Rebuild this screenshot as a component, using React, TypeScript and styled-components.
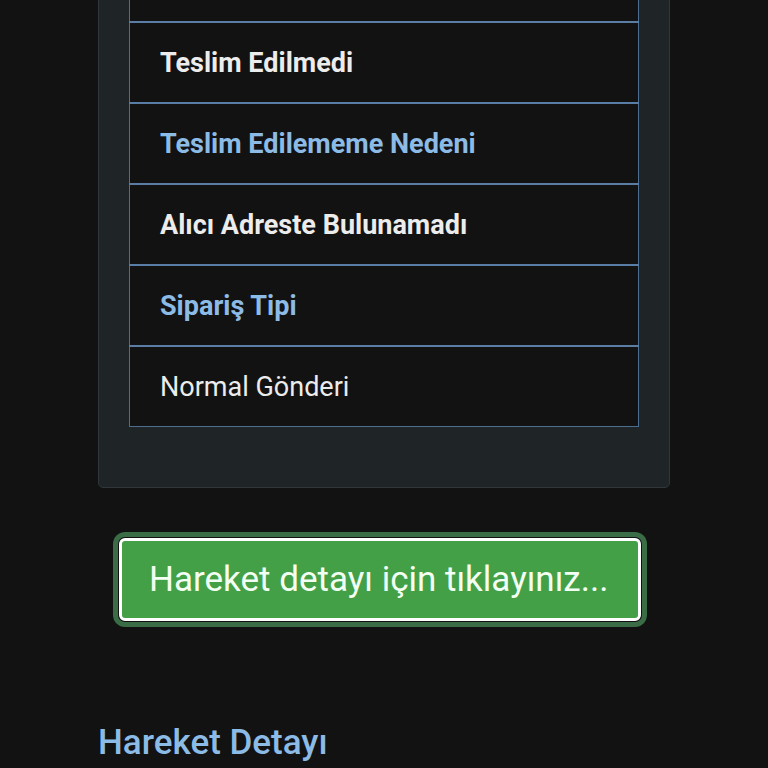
import React from "react";
import styled, { createGlobalStyle } from "styled-components";

const GlobalStyle = createGlobalStyle`
  html, body {
    margin: 0;
    padding: 0;
    background: #121212;
    font-family: Roboto, "Noto Sans", "Liberation Sans", sans-serif;
    overflow: hidden;
  }
`;

const Page = styled.main`
  width: 768px;
  height: 768px;
  overflow: hidden;
  display: flex;
  flex-direction: column;
`;

const Card = styled.section`
  margin: -92px 98px 0;
  padding: 31px 30px 60px;
  background: #1f2427;
  border: 1px solid #30363a;
  border-radius: 5px;
`;

const Table = styled.table`
  width: 100%;
  border-collapse: collapse;
  border-left: 1px solid #4d6d91;
  border-right: 1px solid #4d6d91;
`;

const Cell = styled.td<{ $label?: boolean; $light?: boolean }>`
  height: 79px;
  padding: 0 30px;
  background: #121212;
  border-top: 2px solid #5a7da6;
  border-bottom: 1px solid #4d6d91;
  font-size: 27px;
  font-weight: ${({ $light }) => ($light ? 400 : 700)};
  color: ${({ $label }) => ($label ? "#8cbbe6" : "#ececec")};
`;

const ButtonWrap = styled.div`
  margin: 50px 0 0 119px;
  width: 522px;
`;

const DetailButton = styled.button`
  width: 100%;
  height: 83px;
  background: #43a047;
  border: 3px solid #ffffff;
  border-radius: 6px;
  box-shadow: 0 0 0 1px #111, 0 0 0 6px #3a6c45;
  color: #f4fff4;
  font-family: Roboto, "Noto Sans", sans-serif;
  font-size: 35px;
  text-align: left;
  padding: 0 27px;
`;

const Heading = styled.h2`
  margin: 101px 0 0 98px;
  font-size: 35px;
  font-weight: 500;
  color: #8cbbe6;
`;

const rows: { text: string; label?: boolean; light?: boolean }[] = [
  { text: "Teslim Durumu", label: true },
  { text: "Teslim Edilmedi" },
  { text: "Teslim Edilememe Nedeni", label: true },
  { text: "Alıcı Adreste Bulunamadı" },
  { text: "Sipariş Tipi", label: true },
  { text: "Normal Gönderi", light: true },
];

export default function App() {
  return (
    <Page>
      <GlobalStyle />
      <Card>
        <Table>
          <tbody>
            {rows.map((r) => (
              <tr key={r.text}>
                <Cell $label={r.label} $light={r.light}>
                  {r.text}
                </Cell>
              </tr>
            ))}
          </tbody>
        </Table>
      </Card>
      <ButtonWrap>
        <DetailButton>Hareket detayı için tıklayınız...</DetailButton>
      </ButtonWrap>
      <Heading>Hareket Detayı</Heading>
    </Page>
  );
}
